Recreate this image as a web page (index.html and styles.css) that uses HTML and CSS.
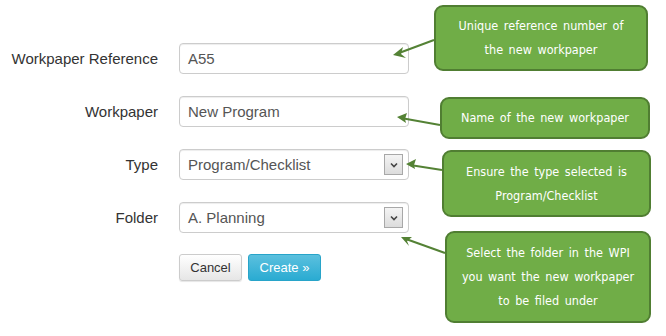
FILE: index.html
```html
<!DOCTYPE html>
<html lang="en">
<head>
    <meta charset="UTF-8">
    <title>New Workpaper</title>
    <link rel="stylesheet" href="styles.css">
</head>
<body>
    <div class="canvas">
        <form class="wp-form">
            <label class="wp-label">Workpaper Reference</label>
            <div class="wp-input">A55</div>

            <label class="wp-label">Workpaper</label>
            <div class="wp-input">New Program</div>

            <label class="wp-label">Type</label>
            <div class="wp-input wp-select">
                <span>Program/Checklist</span>
                <span class="drop-btn">
                    <svg width="8" height="6" viewBox="0 0 8 6"><path d="M1 1.5 L4 4.5 L7 1.5" fill="none" stroke="#444" stroke-width="1.6"/></svg>
                </span>
            </div>

            <label class="wp-label">Folder</label>
            <div class="wp-input wp-select">
                <span>A. Planning</span>
                <span class="drop-btn">
                    <svg width="8" height="6" viewBox="0 0 8 6"><path d="M1 1.5 L4 4.5 L7 1.5" fill="none" stroke="#444" stroke-width="1.6"/></svg>
                </span>
            </div>

            <span></span>
            <div class="actions">
                <button type="button" class="btn btn-default">Cancel</button>
                <button type="button" class="btn btn-info">Create &raquo;</button>
            </div>
        </form>

        <!-- annotation arrows -->
        <svg class="arrows" width="666" height="336" viewBox="0 0 666 336">
            <line x1="434" y1="40" x2="399" y2="53" stroke="#548235" stroke-width="2" />
            <line x1="440" y1="125" x2="401" y2="118" stroke="#548235" stroke-width="2" />
            <line x1="442" y1="170" x2="410" y2="165" stroke="#548235" stroke-width="2" />
            <line x1="445" y1="253" x2="406" y2="239" stroke="#548235" stroke-width="2" />
            <path d="M393 55 L403 47 L401 54 L406 58 Z" fill="#548235"/>
            <path d="M397 117 L407 113 L405 119 L406 123 Z" fill="#548235"/>
            <path d="M406 164 L416 159 L414 165 L415 169 Z" fill="#548235"/>
            <path d="M401 237 L412 237 L407 241 L409 246 Z" fill="#548235"/>
        </svg>

        <div class="callout c1">Unique reference number of<br>the new workpaper</div>
        <div class="callout c2">Name of the new workpaper</div>
        <div class="callout c3">Ensure the type selected is<br>Program/Checklist</div>
        <div class="callout c4">Select the folder in the WPI<br>you want the new workpaper<br>to be filed under</div>
    </div>
</body>
</html>
```

FILE: styles.css
```css
body {
    margin: 0;
    background: #fff;
    font-family: 'Liberation Sans', Arial, sans-serif;
    color: #333;
}

.canvas {
    position: relative;
    width: 666px;
    height: 336px;
}

.wp-form {
    display: grid;
    grid-template-columns: 158px 230px;
    column-gap: 21px;
    row-gap: 22px;
    padding-top: 43px;
    align-items: center;
}

.wp-label {
    text-align: right;
    font-size: 15px;
    color: #333;
}

.wp-input {
    box-sizing: border-box;
    height: 31px;
    border: 1px solid #ccc;
    border-radius: 4px;
    padding: 0 8px;
    font-size: 15px;
    line-height: 29px;
    color: #555;
    box-shadow: inset 0 1px 1px rgba(0,0,0,0.075);
}

.wp-select {
    display: flex;
    align-items: center;
    justify-content: space-between;
    padding-right: 5px;
}

.drop-btn {
    box-sizing: border-box;
    width: 19px;
    height: 21px;
    border: 1px solid #a8a8a8;
    background: linear-gradient(#f4f4f4, #dcdcdc);
    display: flex;
    align-items: center;
    justify-content: center;
}

.actions {
    display: flex;
    gap: 6px;
    margin-top: -1px;
}

.btn {
    height: 27px;
    padding: 0 10px;
    font-family: 'Liberation Sans', Arial, sans-serif;
    font-size: 13px;
    border-radius: 3px;
    cursor: pointer;
}

.btn-default {
    color: #333;
    background: linear-gradient(#fff, #e6e6e6);
    border: 1px solid #ccc;
    box-shadow: 0 1px 1px rgba(0,0,0,0.1);
    width: 63px;
}

.btn-info {
    color: #fff;
    background: linear-gradient(#5bc0de, #2aabd2);
    border: 1px solid #28a4c9;
    width: 73px;
}

.arrows {
    position: absolute;
    left: 0;
    top: 0;
    pointer-events: none;
}

.callout {
    position: absolute;
    box-sizing: border-box;
    background: #70ad47;
    border: 2px solid #507e32;
    border-radius: 9px;
    color: #fff;
    font-family: 'DejaVu Sans Condensed', 'DejaVu Sans', sans-serif;
    font-size: 12.5px;
    line-height: 24px;
    text-align: center;
    word-spacing: 2px;
    display: flex;
    align-items: center;
    justify-content: center;
}

.c1 { left: 434px; top: 5px;   width: 214px; height: 66px; }
.c2 { left: 440px; top: 97px;  width: 210px; height: 42px; }
.c3 { left: 442px; top: 150px; width: 209px; height: 67px; }
.c4 { left: 445px; top: 231px; width: 206px; height: 92px; }
```
